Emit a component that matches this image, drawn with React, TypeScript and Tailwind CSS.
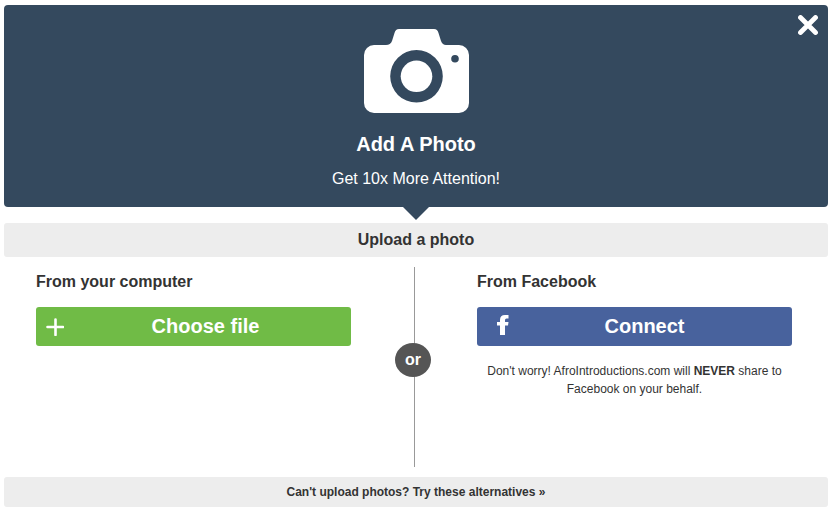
function CameraIcon() {
    return (
        <svg width="105" height="84" viewBox="0 0 105 84" aria-hidden="true">
            <path
                fill="#fff"
                fillRule="evenodd"
                d="M10 16H22Q26.500 16 28 12L30.500 4Q31.500 0 35 0H70Q73.500 0 74.500 4L77 12Q78.500 16 82 16H95A10 10 0 0 1 105 26V74A10 10 0 0 1 95 84H10A10 10 0 0 1 0 74V26A10 10 0 0 1 10 16ZM52.500 21A26.300 26.300 0 1 0 52.500 73.600A26.300 26.300 0 1 0 52.500 21ZM91 26A3.800 3.800 0 1 0 91 33.600A3.800 3.800 0 1 0 91 26Z"
            />
            <circle cx="52.500" cy="47.300" r="15.800" fill="#fff" />
        </svg>
    )
}

function CloseIcon() {
    return (
        <svg width="20" height="20" viewBox="0 0 20 20" aria-hidden="true">
            <path d="M2.500 2.500L17.500 17.500M17.500 2.500L2.500 17.500" stroke="#fff" strokeWidth="4.800" strokeLinecap="round" />
        </svg>
    )
}

function PlusIcon() {
    return (
        <svg width="18" height="18" viewBox="0 0 18 18" aria-hidden="true">
            <path d="M9.500 1.500V17M1.500 9H17" stroke="#fff" strokeWidth="2.600" strokeLinecap="round" />
        </svg>
    )
}

function FacebookIcon() {
    return (
        <svg width="12" height="20" viewBox="0 0 12 20" aria-hidden="true">
            <path fill="#fff" d="M3 20V10.500H0V7H3V5Q3 0 8 0H11.500V3.500H9.500Q8 3.500 8 5V7H11.500L11 10.500H8V20Z" />
        </svg>
    )
}

export default function App() {
    return (
        <main className="pt-[5px] pl-1 pr-[7px] font-['Liberation_Sans',Arial,sans-serif] text-[#333]">
            {/* Header */}
            <header className="relative flex flex-col items-center rounded bg-[#34495e] pt-6 pb-4 text-white">
                <CameraIcon />
                <h1 className="mt-4 text-xl leading-[30px] font-bold">Add A Photo</h1>
                <p className="mt-2 text-base leading-6">Get 10x More Attention!</p>
                <button type="button" aria-label="Close" className="absolute top-[10px] right-[10px] cursor-pointer">
                    <CloseIcon />
                </button>
                <svg className="absolute top-full left-1/2 -translate-x-1/2" width="26" height="13" viewBox="0 0 26 13" aria-hidden="true">
                    <path d="M0 0H26L13 13Z" fill="#34495e" />
                </svg>
            </header>

            <h2 className="mt-4 rounded-[3px] bg-[#ededed] text-center text-base leading-[34px] font-bold">Upload a photo</h2>

            {/* Upload options */}
            <div className="my-[10px] grid min-h-[200px] grid-cols-[1fr_126px_1fr] pl-8 pr-9">
                <section>
                    <h3 className="pt-[3px] text-base leading-6 font-bold">From your computer</h3>
                    <button type="button" className="relative mt-[13px] h-[39px] w-full cursor-pointer rounded-[3px] bg-[#70bb46] pb-0.5 pl-6 text-xl font-bold text-white">
                        <span className="absolute top-[11px] left-[10px]"><PlusIcon /></span>
                        Choose file
                    </button>
                </section>

                <div className="relative flex justify-center">
                    <div className="w-px bg-[#999]"></div>
                    <span className="absolute top-[76px] left-11 h-[34px] w-9 rounded-[50%] bg-[#555] text-center text-base leading-[34px] font-bold text-white">or</span>
                </div>

                <section>
                    <h3 className="pt-[3px] text-base leading-6 font-bold">From Facebook</h3>
                    <button type="button" className="relative mt-[13px] h-[39px] w-full cursor-pointer rounded-[3px] bg-[#48629d] pb-0.5 pl-5 text-xl font-bold text-white">
                        <span className="absolute top-2 left-5"><FacebookIcon /></span>
                        Connect
                    </button>
                    <p className="mt-4 text-center text-xs leading-[18px]">
                        Don't worry! AfroIntroductions.com will <strong>NEVER</strong> share to Facebook on your behalf.
                    </p>
                </section>
            </div>

            <footer className="rounded-[3px] bg-[#ededed] text-center text-xs leading-[30px] font-bold">
                <a href="#alternatives">Can't upload photos? Try these alternatives »</a>
            </footer>
        </main>
    )
}
